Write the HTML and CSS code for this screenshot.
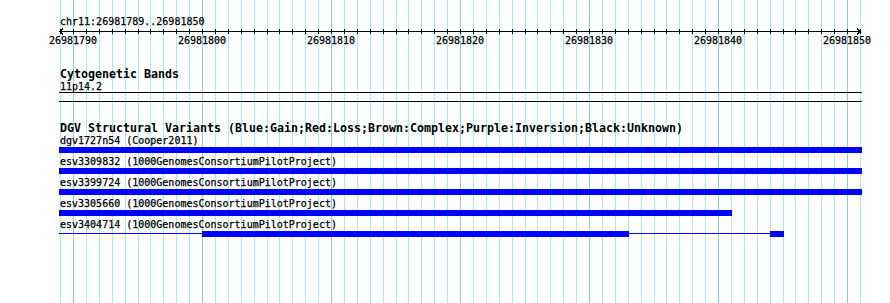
FILE: index.html
```html
<!DOCTYPE html>
<html lang="en">
<head>
  <meta charset="UTF-8" />
  <title>chr11:26981789..26981850</title>
  <link rel="stylesheet" href="styles.css">
</head>
<body>

  <div class="browser">

    <!-- Grid, one line per base -->
    <svg class="grid" width="890" height="303" aria-hidden="true">
      <path class="grid-minor" d="M60.5 0v303M86.5 0v303M99.5 0v303M112.5 0v303M125.5 0v303M138.5 0v303M150.5 0v303M163.5 0v303M176.5 0v303M189.5 0v303M215.5 0v303M228.5 0v303M241.5 0v303M254.5 0v303M267.5 0v303M279.5 0v303M292.5 0v303M305.5 0v303M318.5 0v303M344.5 0v303M357.5 0v303M370.5 0v303M383.5 0v303M396.5 0v303M408.5 0v303M421.5 0v303M434.5 0v303M447.5 0v303M473.5 0v303M486.5 0v303M499.5 0v303M512.5 0v303M525.5 0v303M537.5 0v303M550.5 0v303M563.5 0v303M576.5 0v303M602.5 0v303M615.5 0v303M628.5 0v303M641.5 0v303M654.5 0v303M666.5 0v303M679.5 0v303M692.5 0v303M705.5 0v303M731.5 0v303M744.5 0v303M757.5 0v303M770.5 0v303M783.5 0v303M795.5 0v303M808.5 0v303M821.5 0v303M834.5 0v303M860.5 0v303"/>
      <path class="grid-major" d="M73.5 0v303M202.5 0v303M331.5 0v303M460.5 0v303M589.5 0v303M718.5 0v303M847.5 0v303"/>
    </svg>

    <div class="tracks">

      <!-- Ruler -->
      <section class="ruler-track">
        <div class="seg-name">chr11:26981789..26981850</div>
        <svg class="ruler" width="890" height="18">
          <path class="ruler-line" d="M60 3.5H861M63 0.5L60 3.5L63 6.5M857 0.5L860 3.5L857 6.5"/>
          <path class="ruler-ticks" d="M60.5 1v5M73.5 1v5M86.5 1v5M99.5 1v5M112.5 1v5M125.5 1v5M138.5 1v5M150.5 1v5M163.5 1v5M176.5 1v5M189.5 1v5M202.5 1v5M215.5 1v5M228.5 1v5M241.5 1v5M254.5 1v5M267.5 1v5M279.5 1v5M292.5 1v5M305.5 1v5M318.5 1v5M331.5 1v5M344.5 1v5M357.5 1v5M370.5 1v5M383.5 1v5M396.5 1v5M408.5 1v5M421.5 1v5M434.5 1v5M447.5 1v5M460.5 1v5M473.5 1v5M486.5 1v5M499.5 1v5M512.5 1v5M525.5 1v5M537.5 1v5M550.5 1v5M563.5 1v5M576.5 1v5M589.5 1v5M602.5 1v5M615.5 1v5M628.5 1v5M641.5 1v5M654.5 1v5M666.5 1v5M679.5 1v5M692.5 1v5M705.5 1v5M718.5 1v5M731.5 1v5M744.5 1v5M757.5 1v5M770.5 1v5M783.5 1v5M795.5 1v5M808.5 1v5M821.5 1v5M834.5 1v5M847.5 1v5M860.5 1v5"/>
          <text class="ruler-label" x="73" y="16">26981790</text>
          <text class="ruler-label" x="202" y="16">26981800</text>
          <text class="ruler-label" x="331" y="16">26981810</text>
          <text class="ruler-label" x="460" y="16">26981820</text>
          <text class="ruler-label" x="589" y="16">26981830</text>
          <text class="ruler-label" x="718" y="16">26981840</text>
          <text class="ruler-label" x="847" y="16">26981850</text>
        </svg>
      </section>

      <!-- Cytogenetic bands -->
      <section class="track">
        <h2 class="track-title">Cytogenetic Bands</h2>
        <div class="band-name">11p14.2</div>
        <div class="band"></div>
      </section>

      <!-- DGV structural variants -->
      <section class="track track-dgv">
        <h2 class="track-title">DGV Structural Variants (Blue:Gain;Red:Loss;Brown:Complex;Purple:Inversion;Black:Unknown)</h2>

        <div class="feature-label">dgv1727n54 (Cooper2011)</div>
        <div class="feature"><span class="block" style="width: 803px"></span></div>

        <div class="feature-label">esv3309832 (1000GenomesConsortiumPilotProject)</div>
        <div class="feature"><span class="block" style="width: 803px"></span></div>

        <div class="feature-label">esv3399724 (1000GenomesConsortiumPilotProject)</div>
        <div class="feature"><span class="block" style="width: 803px"></span></div>

        <div class="feature-label">esv3305660 (1000GenomesConsortiumPilotProject)</div>
        <div class="feature"><span class="block" style="width: 673px"></span></div>

        <div class="feature-label">esv3404714 (1000GenomesConsortiumPilotProject)</div>
        <div class="feature">
          <span class="join" style="width: 143px"></span>
          <span class="block" style="width: 427px"></span>
          <span class="join" style="width: 141px"></span>
          <span class="block" style="width: 14px"></span>
        </div>
      </section>

    </div>
  </div>

</body>
</html>
```

FILE: styles.css
```css
/* Base */
body {
  margin: 0;
  background: #ffffff;
  color: #000000;
  font-family: 'DejaVu Sans Mono', 'Liberation Mono', monospace;
  font-size: 10px;
}

.browser {
  position: relative;
  width: 890px;
  height: 303px;
  overflow: hidden;
  background: #ffffff;
}

/* Grid behind tracks */
.grid {
  position: absolute;
  top: 0;
  left: 0;
  shape-rendering: crispEdges;
}
.grid-minor {
  stroke: #aae8f0;
  stroke-width: 1;
}
.grid-major {
  stroke: #8ccbe8;
  stroke-width: 1;
}

.tracks {
  position: relative;
  padding-top: 15px;
}

/* Ruler */
.seg-name {
  margin-left: 60px;
  height: 13px;
  line-height: 13px;
  -webkit-text-stroke: 0.25px #000000;
}
.ruler {
  display: block;
  shape-rendering: crispEdges;
}
.ruler-line,
.ruler-ticks {
  fill: none;
  stroke: #000000;
  stroke-width: 1;
}
.ruler-label {
  font-family: 'DejaVu Sans Mono', 'Liberation Mono', monospace;
  font-size: 10px;
  text-anchor: middle;
  fill: #000000;
  stroke: #000000;
  stroke-width: 0.25px;
}

/* Tracks */
.track-title {
  margin: 22px 0 0 60px;
  height: 12px;
  line-height: 12px;
  font-size: 11.63px;
  font-weight: 700;
  white-space: nowrap;
}
.track-dgv .track-title {
  margin-top: 20px;
}

.band-name {
  margin-left: 60px;
  height: 12px;
  line-height: 13px;
  -webkit-text-stroke: 0.25px #000000;
}
.band {
  margin-left: 59px;
  width: 803px;
  height: 8px;
  border-top: 1px solid #000000;
  border-bottom: 1px solid #000000;
}

/* Features */
.feature-label {
  margin-left: 60px;
  height: 13px;
  line-height: 13px;
  white-space: nowrap;
  -webkit-text-stroke: 0.25px #000000;
}
.feature {
  display: flex;
  margin-left: 59px;
  height: 6px;
  margin-bottom: 2px;
}
.feature .block {
  flex: none;
  height: 6px;
  background: #0000ff;
}
/* thin connector between blocks */
.feature .join {
  flex: none;
  height: 6px;
  background: linear-gradient(#0000ff, #0000ff) 0 2px / 100% 1px no-repeat;
}
```
